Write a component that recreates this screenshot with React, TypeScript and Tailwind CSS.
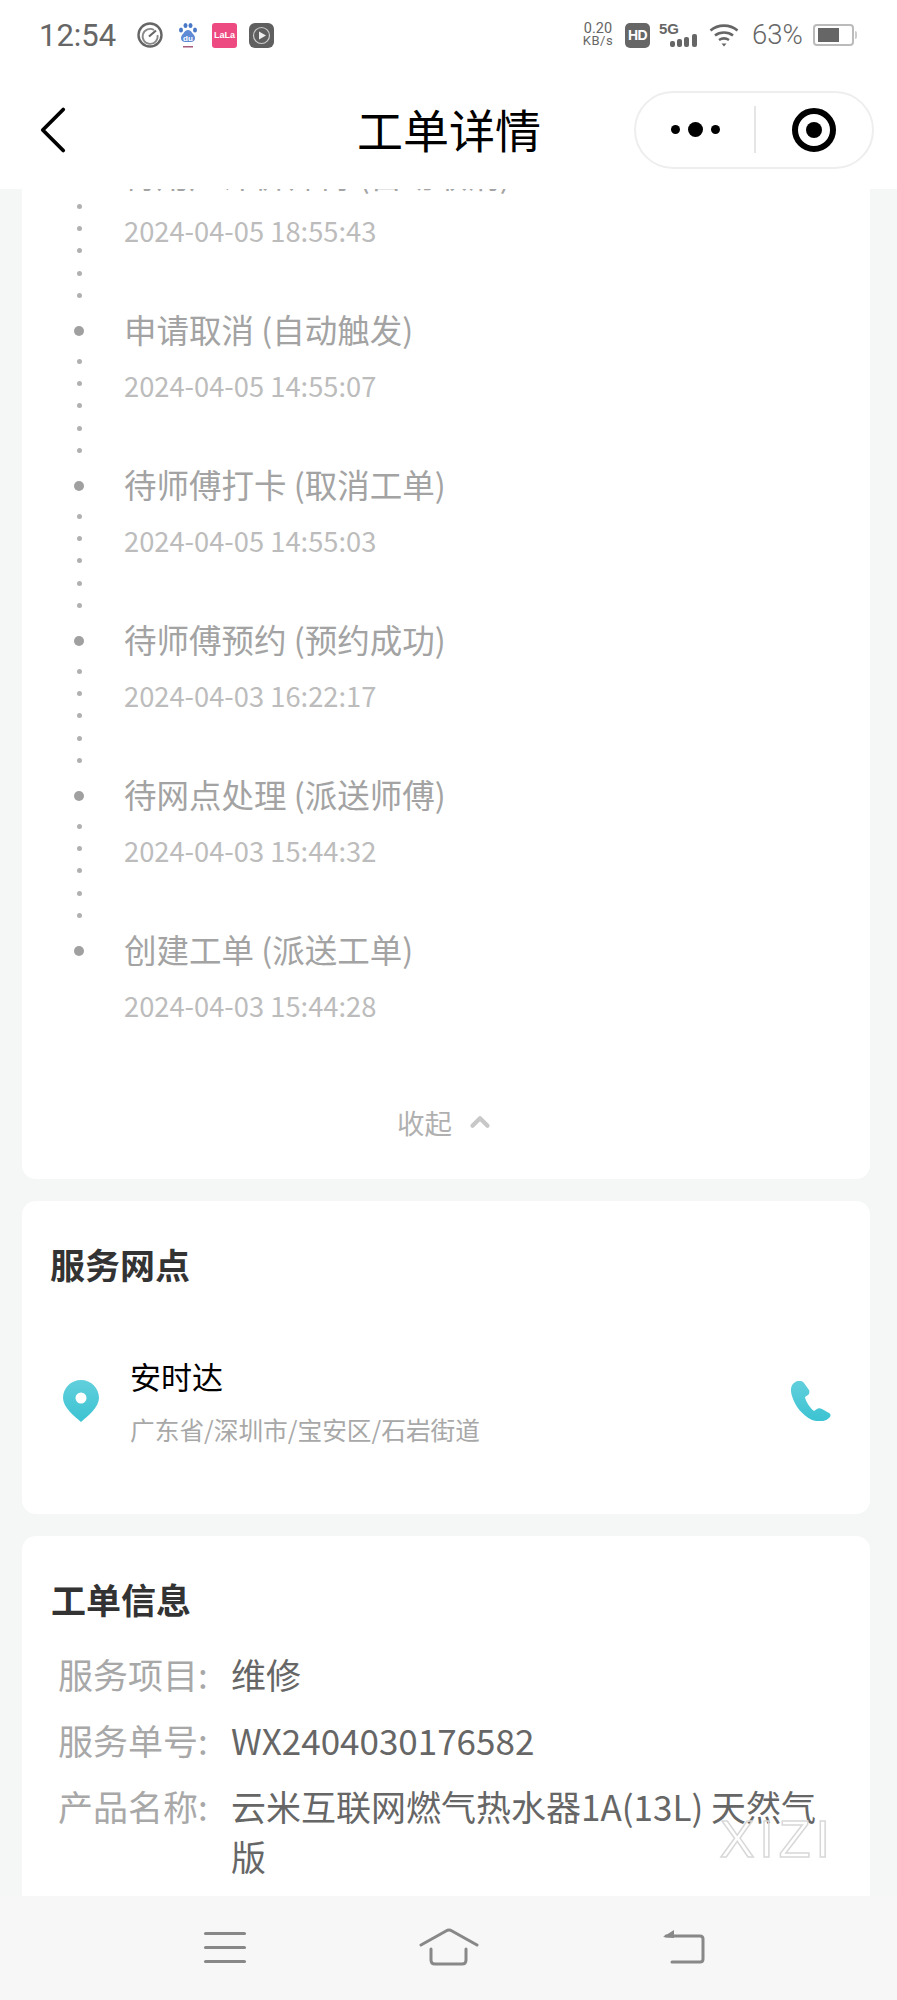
import React from "react";
import { ChevronLeft, ChevronUp } from "lucide-react";

const FONT = "font-['Noto_Sans_CJK_SC','Noto_Sans',sans-serif]";

const timeline = [
  { title: "待用户评价师傅 (自动取消)", time: "2024-04-05 18:55:43" },
  { title: "申请取消 (自动触发)", time: "2024-04-05 14:55:07" },
  { title: "待师傅打卡 (取消工单)", time: "2024-04-05 14:55:03" },
  { title: "待师傅预约 (预约成功)", time: "2024-04-03 16:22:17" },
  { title: "待网点处理 (派送师傅)", time: "2024-04-03 15:44:32" },
  { title: "创建工单 (派送工单)", time: "2024-04-03 15:44:28" },
];

const infoRows = [
  { label: "服务项目:", value: "维修" },
  { label: "服务单号:", value: "WX2404030176582" },
  { label: "产品名称:", value: "云米互联网燃气热水器1A(13L) 天然气版" },
];

const StatusBar = () => (
  <div className="flex h-[70px] items-center justify-between pl-[39px] pr-[40px] text-[#666]">
    <div className="flex items-center">
      <span className="w-[78px] text-[31px] leading-none font-['Roboto',sans-serif]">12:54</span>
      <svg className="ml-[20px]" width="26" height="26" viewBox="0 0 26 26" fill="none">
        <circle cx="13" cy="13" r="11.500" stroke="#666" strokeWidth="2.400" />
        <path d="M17 8A7.500 7.500 0 1 0 20.500 13" stroke="#888" strokeWidth="1.800" />
        <path d="M12 14.500l7-6" stroke="#666" strokeWidth="2.200" />
      </svg>
      <svg className="ml-[15px]" width="20" height="26" viewBox="0 0 20 26">
        <ellipse cx="3" cy="8" rx="2" ry="2.500" fill="#4a78c8" />
        <ellipse cx="7.500" cy="3.500" rx="2" ry="2.500" fill="#4a78c8" />
        <ellipse cx="12.500" cy="3.500" rx="2" ry="2.500" fill="#4a78c8" />
        <ellipse cx="17" cy="8" rx="2" ry="2.500" fill="#4a78c8" />
        <path d="M10 8c3 0 4 3 6 5 2 3 1 7-3 7H7c-4 0-5-4-3-7 2-2 3-5 6-5z" fill="#5f8bd6" />
        <text x="10" y="18.500" textAnchor="middle" fontSize="8" fontWeight="700" fill="#fff" fontFamily="Liberation Sans">du</text>
        <rect x="5" y="24" width="10" height="1.500" fill="#a85a7a" />
      </svg>
      <div className="ml-[14px] flex h-[25px] w-[25px] items-center justify-center rounded-[3px] bg-[#ee4a82] text-[9px] leading-none font-bold text-white font-['Liberation_Sans',sans-serif]">
        LaLa
      </div>
      <div className="ml-[12px] flex h-[25px] w-[25px] items-center justify-center rounded-[6px] bg-[#5f5f5f]">
        <svg width="19" height="19" viewBox="0 0 19 19" fill="none">
          <circle cx="9.500" cy="9.500" r="8" stroke="#ccc" strokeWidth="1.200" />
          <path d="M7 5.500l7 4-7 4z" fill="#eee" />
        </svg>
      </div>
    </div>
    <div className="flex items-center">
      <div className="flex w-[30px] flex-col items-center text-[14.500px] leading-[12.500px] font-['Roboto',sans-serif]">
        <span>0.20</span>
        <span className="text-[13px] tracking-[0.5px]">KB/s</span>
      </div>
      <div className="ml-[12px] flex h-[25px] w-[25px] items-center justify-center rounded-[5px] bg-[#666] text-[14px] leading-none font-bold tracking-[-0.5px] text-white font-['Liberation_Sans',sans-serif]">
        HD
      </div>
      <svg className="ml-[9px]" width="40" height="26" viewBox="0 0 40 26">
        <text x="0" y="12" fontSize="15" fontWeight="700" fill="#666" fontFamily="Liberation Sans">5G</text>
        <rect x="11" y="19" width="5" height="6" rx="2" fill="#666" />
        <rect x="18" y="17" width="5" height="8" rx="2" fill="#666" />
        <rect x="25" y="15" width="5" height="10" rx="2" fill="#666" />
        <rect x="33" y="12" width="5" height="13" rx="2" fill="#666" />
      </svg>
      <svg className="ml-[10px]" width="30" height="26" viewBox="0 0 30 26" fill="none">
        <path d="M1.500 8.500C9 2 21 2 28.500 8.500" stroke="#666" strokeWidth="2.600" />
        <path d="M6 13.500C11 9.500 19 9.500 24 13.500" stroke="#666" strokeWidth="2.600" />
        <path d="M10 18C13 16 17 16 20 18" stroke="#666" strokeWidth="2.600" />
        <path d="M12.500 21.500h5L15 24.500z" fill="#666" />
      </svg>
      <span className="ml-[13px] w-[51px] text-[27.500px] leading-none font-light font-['Roboto',sans-serif]">63%</span>
      <div className="ml-[10px] flex h-[22px] w-[41px] items-center rounded-[4px] border-2 border-[#bbb] px-[3px]">
        <div className="h-[14px] w-[21px] bg-[#666]" />
      </div>
      <div className="ml-[1px] h-[8px] w-[2px] rounded-r-sm bg-[#ccc]" />
    </div>
  </div>
);

const TitleBar = () => (
  <div className="flex h-[119px] items-center pr-[23px]">
    <div className="w-[264px] pl-[12px]">
      <ChevronLeft className="h-[82px] w-[82px] text-black" strokeWidth={1.1} />
    </div>
    <div className="mt-[-3px] flex-1 text-center text-[46px] leading-[58px] text-black">工单详情</div>
    <div className="flex h-[78px] w-[240px] items-center rounded-full border-2 border-[#eee] bg-white">
      <div className="flex w-[118px] items-center justify-center gap-[8px]">
        <span className="h-[9px] w-[9px] rounded-full bg-black" />
        <span className="h-[15px] w-[15px] rounded-full bg-black" />
        <span className="h-[9px] w-[9px] rounded-full bg-black" />
      </div>
      <div className="h-[47px] w-[2px] bg-[#e5e5e5]" />
      <div className="flex flex-1 items-center justify-center">
        <div className="flex h-[44px] w-[44px] items-center justify-center rounded-full border-[6px] border-black">
          <div className="h-[16px] w-[16px] rounded-full bg-black" />
        </div>
      </div>
    </div>
  </div>
);

const TimelineItem = ({ title, time, last }: { title: string; time: string; last: boolean }) => (
  <div className="flex h-[155px]">
    <div className="flex w-[24px] flex-col items-center">
      <div className="mt-[25px] h-[10px] w-[10px] rounded-full bg-[#a0a0a0]" />
      {!last && (
        <div className="mt-[22.500px] flex flex-col gap-[17.400px]">
          {[0, 1, 2, 3, 4].map((n) => (
            <div key={n} className="h-[5px] w-[5px] rounded-full bg-[#b0b0b0]" />
          ))}
        </div>
      )}
    </div>
    <div className="ml-[33px] mt-[-2px]">
      <div className="text-[32.500px] leading-[60px] text-[#a3a3a3]">{title}</div>
      <div className="mt-[1px] text-[27.300px] leading-[50px] text-[#bcbcbc]">{time}</div>
    </div>
  </div>
);

const TimelineCard = () => (
  <div className="mt-[-43px] h-[1033px] shrink-0 rounded-b-[14px] bg-white pl-[45px]">
    {timeline.map((item, i) => (
      <TimelineItem key={item.time} title={item.title} time={item.time} last={i === timeline.length - 1} />
    ))}
    <div className="mt-[26px] flex items-center justify-center gap-[13px] pr-[45px] text-[#b0b0b0]">
      <span className="text-[27.500px] leading-[40px]">收起</span>
      <ChevronUp className="h-[30px] w-[30px] text-[#c8c8c8]" strokeWidth={3.4} />
    </div>
  </div>
);

const ServiceCard = () => (
  <div className="mt-[22px] h-[313px] shrink-0 rounded-[14px] bg-white">
    <div className="pl-[28px] pt-[38px] text-[35px] leading-[50px] font-bold text-[#333]">服务网点</div>
    <div className="mt-[64px] flex items-center pl-[41px] pr-[39px]">
      <svg width="36" height="42" viewBox="0 0 36 42">
        <defs>
          <linearGradient id="teal1" x1="0" y1="0" x2="0" y2="1">
            <stop offset="0" stopColor="#62cfdc" />
            <stop offset="1" stopColor="#3cc3d2" />
          </linearGradient>
        </defs>
        <path d="M18 0C8 0 0 8 0 18c0 9 11 18 18 24 7-6 18-15 18-24C36 8 28 0 18 0z" fill="url(#teal1)" />
        <circle cx="18" cy="18" r="5.500" fill="#fff" />
      </svg>
      <div className="ml-[31px] flex-1">
        <div className="mt-[-2px] text-[31px] leading-[50px] text-black">安时达</div>
        <div className="mt-[8px] text-[24.700px] leading-[40px] text-[#a8a8a8]">广东省/深圳市/宝安区/石岩街道</div>
      </div>
      <svg width="40" height="40" viewBox="0 0 40 40">
        <path d="M3 2C0 4-1 9 1 15c3 10 10 19 20 24 6 2 13 2 17-2 2-2 2-4 0-5l-7-4c-2-1-4-1-5 0l-3 2c-4-3-8-9-9-14l3-2c1-1 2-3 1-5L13 2C11-1 6-1 3 2z" fill="url(#teal1)" />
      </svg>
    </div>
  </div>
);

const InfoCard = () => (
  <div className="relative mt-[22px] flex-1 rounded-t-[14px] bg-white pl-[29px] pr-[38px]">
    <div className="pt-[38px] text-[35px] leading-[50px] font-bold text-[#333]">工单信息</div>
    <div className="mt-[25px] flex flex-col gap-[16px]">
      {infoRows.map((row) => (
        <div key={row.label} className="flex pl-[7px] text-[35px] leading-[50px]">
          <span className="w-[173px] shrink-0 text-[#a8a8a8]">{row.label}</span>
          <span className="text-[#666]">{row.value}</span>
        </div>
      ))}
    </div>
    <div className="absolute right-[35px] top-[281px] text-[52px] leading-[44px] tracking-[5px] text-transparent font-['Liberation_Sans',sans-serif] [-webkit-text-stroke:1.5px_#d8d8d8]">
      XIZI
    </div>
  </div>
);

const BottomNav = () => (
  <div className="flex h-[104px] shrink-0 items-center bg-[#f7f7f7] pb-[2px] pl-[204px]">
    <div className="flex h-[31px] w-[42px] flex-col justify-between">
      <div className="h-[3px] rounded-full bg-[#888]" />
      <div className="h-[3px] rounded-full bg-[#888]" />
      <div className="h-[3px] rounded-full bg-[#888]" />
    </div>
    <svg className="ml-[173px]" width="60" height="38" viewBox="0 0 60 38" fill="none" stroke="#888" strokeWidth="3" strokeLinecap="round">
      <path d="M2 17L27 3q3-2 6 0l25 14" />
      <path d="M12 21v11q0 4 4 4h27q4 0 4-4V21" />
    </svg>
    <svg className="ml-[184px]" width="42" height="36" viewBox="0 0 42 36" fill="none" stroke="#888" strokeWidth="3" strokeLinecap="round">
      <path d="M3 7h34q3 0 3 3v20q0 3-3 3H9" />
      <path d="M0 8L11 1v8z" fill="#888" stroke="none" />
    </svg>
  </div>
);

export default function App() {
  return (
    <div className={`flex h-[2000px] w-[897px] flex-col overflow-hidden bg-[#f5f7f7] ${FONT}`}>
      <header className="relative z-10 shrink-0 bg-white">
        <StatusBar />
        <TitleBar />
      </header>
      <main className="flex min-h-0 flex-1 flex-col overflow-hidden pl-[22px] pr-[27px]">
        <TimelineCard />
        <ServiceCard />
        <InfoCard />
      </main>
      <BottomNav />
    </div>
  );
}
